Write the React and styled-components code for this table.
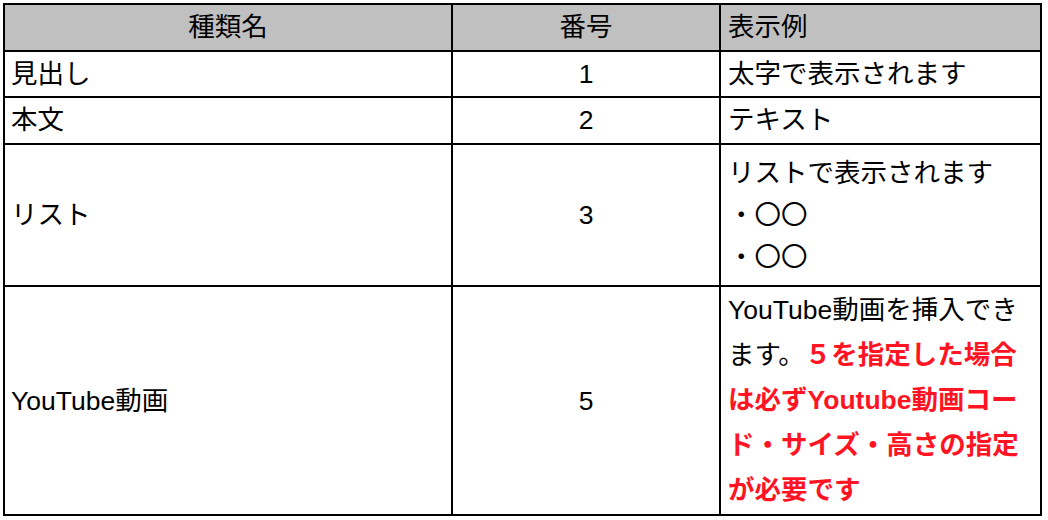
import React from "react";
import styled, { createGlobalStyle } from "styled-components";

const GlobalStyle = createGlobalStyle`
  body {
    margin: 0;
    background: #fff;
    font-family: "Liberation Sans", "Noto Sans CJK JP", sans-serif;
    color: #000;
  }
`;

const Sheet = styled.div`
  padding: 3px 0 0 3px;
`;

const Table = styled.table`
  border-collapse: collapse;
  table-layout: fixed;
  width: 1037px;
  font-size: 26.5px;
  border: 2px solid #000;
`;

const Th = styled.th`
  background: #c0c0c0;
  border: 2px solid #000;
  font-weight: normal;
  line-height: 45px;
  padding: 0 7px;
  text-align: ${({ $align }) => $align || "center"};
`;

const Td = styled.td`
  border: 2px solid #000;
  line-height: ${({ $lh }) => $lh || "44px"};
  padding: ${({ $pad }) => $pad || "0 6px"};
  text-align: ${({ $align }) => $align || "left"};
  vertical-align: middle;
  word-break: break-all;
`;

const Alert = styled.span`
  color: #ff1424;
  font-weight: bold;
`;

const rows = [
  { name: "見出し", no: "1", sample: "太字で表示されます", lh: "44px" },
  { name: "本文", no: "2", sample: "テキスト", lh: "45px" },
];

export default function App() {
  return (
    <>
      <GlobalStyle />
      <Sheet>
        <Table>
          <colgroup>
            <col style={{ width: 448 }} />
            <col style={{ width: 268 }} />
            <col style={{ width: 321 }} />
          </colgroup>
          <thead>
            <tr>
              <Th>種類名</Th>
              <Th>番号</Th>
              <Th $align="left">表示例</Th>
            </tr>
          </thead>
          <tbody>
            {rows.map((r) => (
              <tr key={r.no}>
                <Td $lh={r.lh}>{r.name}</Td>
                <Td $lh={r.lh} $align="center">{r.no}</Td>
                <Td $lh={r.lh} $pad="0 7px">{r.sample}</Td>
              </tr>
            ))}
            <tr>
              <Td>リスト</Td>
              <Td $align="center">3</Td>
              <Td $pad="7px 7px" $lh="42px">
                リストで表示されます
                <br />・〇〇
                <br />・〇〇
              </Td>
            </tr>
            <tr>
              <Td>YouTube動画</Td>
              <Td $align="center">5</Td>
              <Td $pad="1px 10px 1px 7px" $lh="45px">
                YouTube動画を挿入できます。
                <Alert>５を指定した場合は必ずYoutube動画コード・サイズ・高さの指定が必要です</Alert>
              </Td>
            </tr>
          </tbody>
        </Table>
      </Sheet>
    </>
  );
}
